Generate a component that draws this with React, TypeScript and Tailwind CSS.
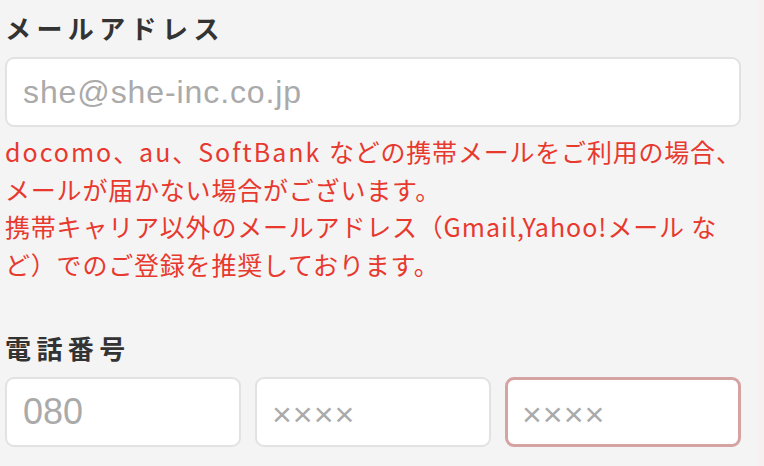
import React from "react";

const jp = { fontFamily: '"Noto Sans CJK JP", "Noto Sans", sans-serif' };
const latin = { fontFamily: '"Liberation Sans", Arial, sans-serif' };

export default function App() {
  return (
    <div className="flex w-[764px] h-[466px] overflow-hidden bg-[#f4f4f4]" style={jp}>
      <div className="flex-1 pl-[5px] pr-[16px] pt-[10px]">
        <div className="text-[26px] leading-[36px] font-bold tracking-[5.4px] text-[#333333]">
          メールアドレス
        </div>
        <div className="mt-[11px] h-[70px] w-[736px] rounded-[9px] border-2 border-[#e2e2e2] bg-white flex items-center pl-[16px]">
          <span className="text-[32px] text-[#aaaaaa] tracking-[0.9px]" style={latin}>
            she@she-inc.co.jp
          </span>
        </div>
        <div className="mt-[6px] text-[25px] leading-[37.5px] text-[#e8392f] tracking-[0.8px] whitespace-nowrap">
          <span className="tracking-[2px]">docomo</span>、<span className="tracking-[2px]">au</span>、
          <span className="tracking-[2px]">SoftBank </span>などの携帯メールをご利用の場合、
          <br />
          メールが届かない場合がございます。
          <br />
          携帯キャリア以外のメールアドレス（<span className="tracking-[1px]">Gmail,Yahoo!</span>メール な
          <br />
          ど）でのご登録を推奨しております。
        </div>
        <div className="mt-[47px] text-[26px] leading-[36px] font-bold tracking-[5.4px] text-[#333333]">
          電話番号
        </div>
        <div className="mt-[11px] grid grid-cols-3 gap-[14px] w-[736px]">
          <div className="h-[70px] rounded-[9px] border-2 border-[#e2e2e2] bg-white flex items-center pl-[16px]">
            <span className="text-[36px] text-[#aaaaaa]" style={latin}>
              080
            </span>
          </div>
          <div className="h-[70px] rounded-[9px] border-2 border-[#e2e2e2] bg-white flex items-center pl-[15px]">
            <span className="text-[34px] text-[#aaaaaa] pt-[4px] tracking-[1px]" style={latin}>
              ××××
            </span>
          </div>
          <div className="h-[70px] rounded-[9px] border-[3px] border-[#d4a3a2] bg-white flex items-center pl-[14px]">
            <span className="text-[34px] text-[#aaaaaa] pt-[4px] tracking-[1px]" style={latin}>
              ××××
            </span>
          </div>
        </div>
      </div>
      <div className="w-[7px] bg-[#f6f0f0]" />
    </div>
  );
}
